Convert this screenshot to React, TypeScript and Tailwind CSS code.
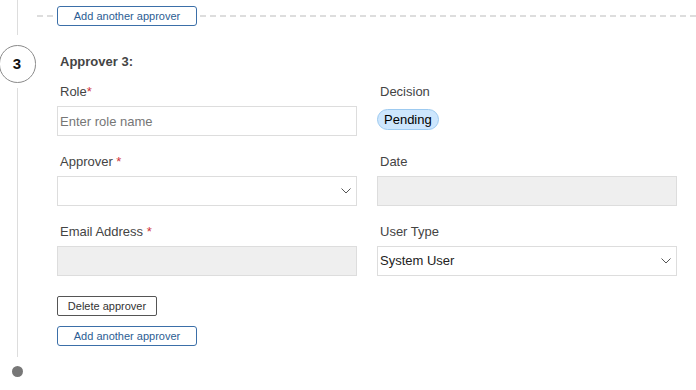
import { ReactNode } from "react";

function Chevron() {
  return (
    <svg className="w-[10px] h-[6px]" viewBox="0 0 10 6" fill="none" stroke="#555" strokeWidth={1}>
      <path d="M0.5 0.5 L5 5 L9.5 0.5" />
    </svg>
  );
}

function Label({ children, required, spaced }: { children: ReactNode; required?: boolean; spaced?: boolean }) {
  return (
    <div className="pl-[3px] h-[15px] leading-[15px] text-[13px] text-[#444] mb-[7px]">
      {children}
      {required && <span className="text-[#d0353b]">{spaced ? " *" : "*"}</span>}
    </div>
  );
}

function AddButton() {
  return (
    <button className="block w-[140px] h-[20px] shrink-0 border border-[#3b6fa8] rounded-[3px] bg-white text-[11px] leading-[18px] text-[#2b5d93]">
      Add another approver
    </button>
  );
}

function SelectBox({ value }: { value?: string }) {
  return (
    <div className="h-[30px] border border-[#ddd] bg-white flex items-center justify-between pl-[2px] pr-[5px] text-[13px] text-[#222]">
      <span>{value ?? ""}</span>
      <Chevron />
    </div>
  );
}

export default function App() {
  return (
    <div className="w-[696px] h-[390px] bg-white overflow-hidden font-['Liberation_Sans',Arial,sans-serif]">
      <div className="flex">
        {/* timeline */}
        <div className="w-[34px] shrink-0 flex flex-col items-center">
          <div className="w-px h-[35px] bg-[#ddd]" />
          <div className="mt-[10px] w-[37px] h-[38px] rounded-full border border-[#8a8a8a] flex items-center justify-center text-[15px] font-bold text-[#111]">
            3
          </div>
          <div className="mt-[5px] w-px flex-1 bg-[#ddd]" />
        </div>

        <div className="flex-1 pb-[11px]">
          <div className="h-[32px] flex items-center pl-[3px] gap-[3px]">
            <div className="w-[17px] h-[2px] bg-[repeating-linear-gradient(to_right,#ddd_0,#ddd_6px,transparent_6px,transparent_10px)]" />
            <AddButton />
            <div className="flex-1 h-[2px] bg-[repeating-linear-gradient(to_right,#ddd_0,#ddd_6px,transparent_6px,transparent_10px)]" />
          </div>

          <div className="pl-[23px] pr-[19px]">
            <div className="mt-[22px] pl-[3px] h-[15px] leading-[15px] text-[13px] font-bold text-[#444]">Approver 3:</div>

            <div className="mt-[15px] grid grid-cols-[300px_300px] gap-x-[20px] gap-y-[18px]">
              <div>
                <Label required>Role</Label>
                <input
                  placeholder="Enter role name"
                  className="block w-full h-[30px] border border-[#ddd] px-[2px] text-[13px] text-[#222] placeholder:text-[#767676] outline-none"
                />
              </div>
              <div>
                <Label>Decision</Label>
                <div className="mt-[3px] inline-flex h-[21px] items-center px-[6px] rounded-full border border-[#9dcaf0] bg-[#cde6fd] text-[13px] text-black">
                  Pending
                </div>
              </div>

              <div>
                <Label required spaced>Approver</Label>
                <SelectBox />
              </div>
              <div>
                <Label>Date</Label>
                <div className="h-[30px] border border-[#ddd] bg-[#efefef]" />
              </div>

              <div>
                <Label required spaced>Email Address</Label>
                <div className="h-[30px] border border-[#ddd] bg-[#efefef]" />
              </div>
              <div>
                <Label>User Type</Label>
                <SelectBox value="System User" />
              </div>
            </div>

            <button className="mt-[20px] block w-[100px] h-[20px] border border-[#555] rounded-[2px] bg-white text-[11px] leading-[18px] text-[#333]">
              Delete approver
            </button>
            <div className="mt-[10px]">
              <AddButton />
            </div>
          </div>
        </div>
      </div>

      <div className="w-[34px] flex justify-center mt-[9px]">
        <div className="w-[11px] h-[11px] rounded-full bg-[#777]" />
      </div>
    </div>
  );
}
